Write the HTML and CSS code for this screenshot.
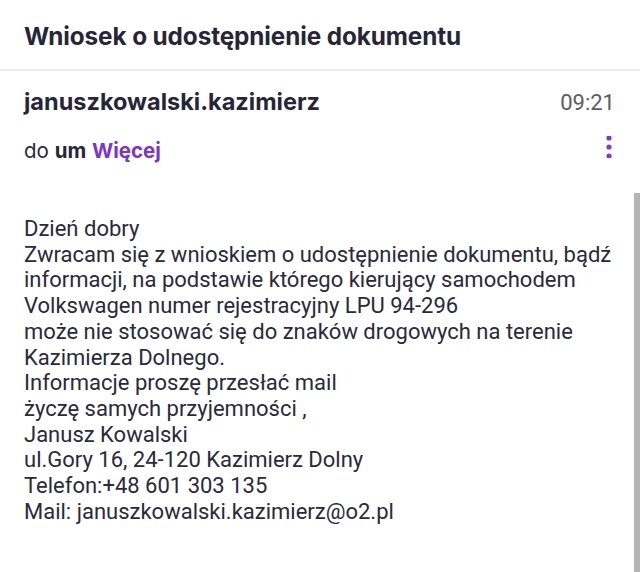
FILE: index.html
```html
<!DOCTYPE html>
<html lang="pl">
<head>
<meta charset="utf-8">
<link rel="stylesheet" href="styles.css">
</head>
<body>
<header class="topbar">
  <h1 class="subject">Wniosek o udostępnienie dokumentu</h1>
</header>
<main class="mail">
  <div class="meta">
    <div class="row">
      <span class="sender">januszkowalski.kazimierz</span>
      <span class="time">09:21</span>
    </div>
    <div class="row row-to">
      <span class="to">do <b>um</b> <span class="more">Więcej</span></span>
      <svg class="kebab" width="8" height="22" viewBox="0 0 8 22"><circle cx="4" cy="2" r="2.6" fill="#7b3bd0"/><circle cx="4" cy="11" r="2.6" fill="#7b3bd0"/><circle cx="4" cy="20" r="2.6" fill="#7b3bd0"/></svg>
    </div>
  </div>
  <div class="body">
    <p>Dzień dobry<br>
Zwracam się z wnioskiem o udostępnienie dokumentu, bądź<br>
informacji, na podstawie którego kierujący samochodem<br>
Volkswagen numer rejestracyjny LPU 94-296<br>
może nie stosować się do znaków drogowych na terenie<br>
Kazimierza Dolnego.<br>
Informacje proszę przesłać mail<br>
życzę samych przyjemności ,<br>
Janusz Kowalski<br>
ul.Gory 16, 24-120 Kazimierz Dolny<br>
Telefon:+48 601 303 135<br>
Mail: januszkowalski.kazimierz@o2.pl</p>
  </div>
  <div class="scrollbar"></div>
</main>
</body>
</html>
```
FILE: styles.css
```css
html, body {
  margin: 0;
  padding: 0;
  background: #fff;
  width: 640px;
  height: 572px;
  overflow: hidden;
}
body {
  font-family: "Inter", "Roboto", sans-serif;
  color: #25253a;
}
.topbar {
  height: 71px;
  border-bottom: 2px solid #ececee;
  box-sizing: border-box;
  padding: 20px 24px 0;
}
.subject {
  margin: 0;
  font-size: 24.3px;
  font-weight: 700;
  line-height: 32px;
  color: #262638;
  letter-spacing: -0.1px;
}
.mail {
  position: relative;
  height: 501px;
}
.meta {
  padding: 16px 25px 0 24px;
}
.row {
  display: flex;
  justify-content: space-between;
  align-items: center;
}
.sender {
  font-size: 23.5px;
  font-weight: 700;
  line-height: 30px;
  color: #262638;
}
.time {
  font-family: "Roboto", sans-serif;
  font-size: 22px;
  color: #5c5c66;
}
.row-to {
  margin-top: 19px;
  padding-right: 2px;
}
.to {
  font-family: "Inter", sans-serif;
  font-size: 20.5px;
  color: #2a2a36;
  line-height: 26px;
}
.to b {
  font-weight: 700;
  color: #262638;
}
.more {
  color: #7b35c8;
  font-weight: 700;
}
.kebab {
  margin-bottom: 8px;
}
.body {
  padding: 50px 16px 0 24px;
}
.body p {
  margin: 0;
  font-family: "Roboto", sans-serif;
  font-size: 22px;
  line-height: 25.7px;
  color: #2a2a3a;
  white-space: nowrap;
}
.scrollbar {
  position: absolute;
  right: 0;
  top: 122px;
  width: 6px;
  bottom: 0;
  background: #b5b5b5;
}
```
